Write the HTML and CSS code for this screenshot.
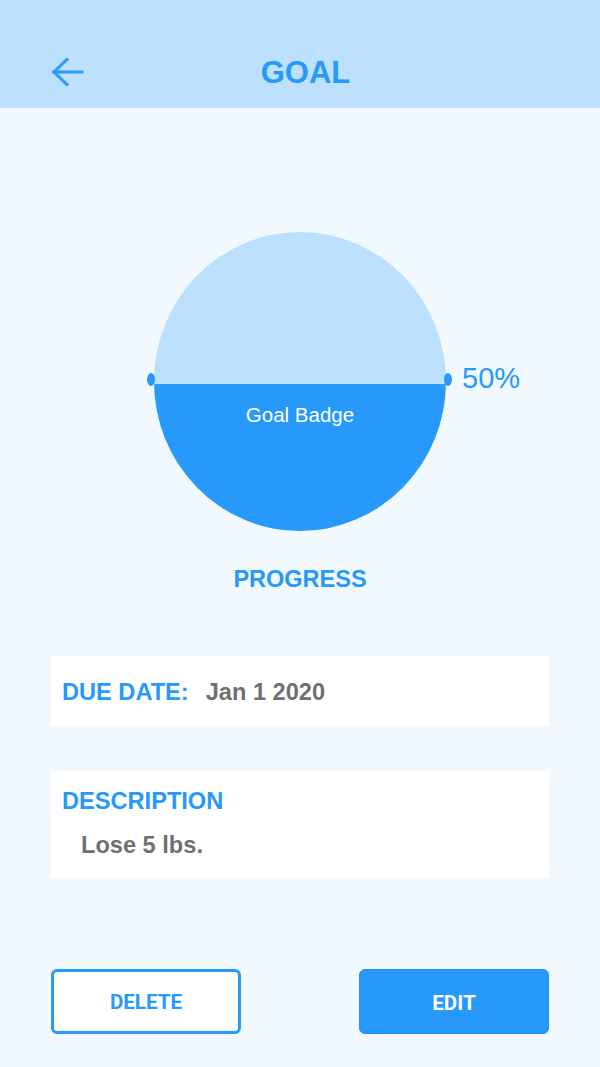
FILE: index.html
```html
<!DOCTYPE html>
<html>
<head>
<meta charset="utf-8">
<link rel="stylesheet" href="styles.css">
</head>
<body>
<header class="topbar">
  <svg class="back" width="32" height="32" viewBox="0 0 32 32" fill="none" stroke="#2699FB" stroke-width="3" stroke-linecap="square">
    <path d="M2 16H30"/>
    <path d="M16 2.5L2 16L16 29.5" stroke-linecap="butt"/>
  </svg>
  <h1 class="title">GOAL</h1>
</header>
<main class="content">
  <section class="badge-wrap">
    <div class="disc">
      <div class="disc-top"></div>
      <div class="disc-bottom">Goal Badge</div>
    </div>
    <span class="handle handle-left"></span>
    <span class="handle handle-right"></span>
    <span class="percent">50%</span>
  </section>
  <div class="progress-label">PROGRESS</div>
  <div class="card card-date">
    <span class="label">DUE DATE:</span>
    <span class="value">Jan 1 2020</span>
  </div>
  <div class="card card-desc">
    <div class="label">DESCRIPTION</div>
    <div class="value desc-text">Lose 5 lbs.</div>
  </div>
  <div class="actions">
    <button class="btn btn-outline">DELETE</button>
    <button class="btn btn-fill">EDIT</button>
  </div>
</main>
</body>
</html>
```
FILE: styles.css
```css
html, body {
  margin: 0;
  padding: 0;
}
body {
  width: 600px;
  height: 1067px;
  background: #F1F9FF;
  overflow: hidden;
  font-family: "Liberation Sans", Arial, sans-serif;
}
.topbar {
  height: 108px;
  box-sizing: border-box;
  background: #BCE0FD;
  display: flex;
  align-items: flex-start;
  padding: 55px 0 0 52px;
}
.back {
  display: block;
  margin-top: 1px;
  flex: none;
}
.title {
  flex: 1;
  margin: 0;
  padding-right: 73px;
  text-align: center;
  font-family: "Liberation Sans", Arial, sans-serif;
  font-weight: bold;
  font-size: 31px;
  line-height: 36px;
  color: #2699FB;
}
.content {
  display: flex;
  flex-direction: column;
  padding: 0 51px;
}
.badge-wrap {
  position: relative;
  width: 292px;
  height: 299px;
  margin: 124px auto 0;
}
.disc {
  width: 100%;
  height: 100%;
  border-radius: 50%;
  overflow: hidden;
  display: flex;
  flex-direction: column;
}
.disc-top {
  height: 152px;
  background: #BCE0FD;
  flex: none;
}
.disc-bottom {
  flex: 1;
  background: #2699FB;
  color: #fff;
  text-align: center;
  font-size: 20.5px;
  line-height: 24px;
  padding-top: 19px;
}
.handle {
  position: absolute;
  top: 141px;
  width: 8px;
  height: 13px;
  border-radius: 50%;
  background: #2699FB;
}
.handle-left {
  left: -7px;
}
.handle-right {
  left: 290px;
}
.percent {
  position: absolute;
  top: 129px;
  left: 308px;
  font-size: 29px;
  line-height: 34px;
  color: #2699FB;
  white-space: nowrap;
}
.progress-label {
  margin-top: 35px;
  text-align: center;
  font-weight: bold;
  font-size: 23.5px;
  line-height: 27px;
  color: #2699FB;
}
.card {
  background: #fff;
  box-sizing: border-box;
}
.label {
  font-weight: bold;
  font-size: 23.6px;
  line-height: 27px;
  color: #2699FB;
}
.value {
  font-weight: bold;
  font-size: 23.6px;
  line-height: 27px;
  color: #707070;
}
.card-date {
  margin-top: 63px;
  height: 70px;
  padding: 23px 0 0 11px;
  display: flex;
  gap: 17px;
}
.card-desc {
  margin-top: 45px;
  height: 107px;
  padding: 17px 0 0 11px;
}
.desc-text {
  margin-top: 17px;
  padding-left: 19px;
}
.actions {
  margin-top: 91px;
  display: flex;
  justify-content: space-between;
}
.btn {
  width: 190px;
  height: 65px;
  box-sizing: border-box;
  border-radius: 6px;
  border: 3px solid #2699FB;
  font-family: Roboto, "Liberation Sans", sans-serif;
  font-weight: bold;
  font-size: 20.6px;
  display: flex;
  align-items: center;
  justify-content: center;
  padding: 0;
}
.btn-outline {
  background: #fff;
  color: #2699FB;
}
.btn-fill {
  background: #2699FB;
  border: 1px solid #1f8ff0;
  color: #fff;
  padding-top: 2px;
}
```
